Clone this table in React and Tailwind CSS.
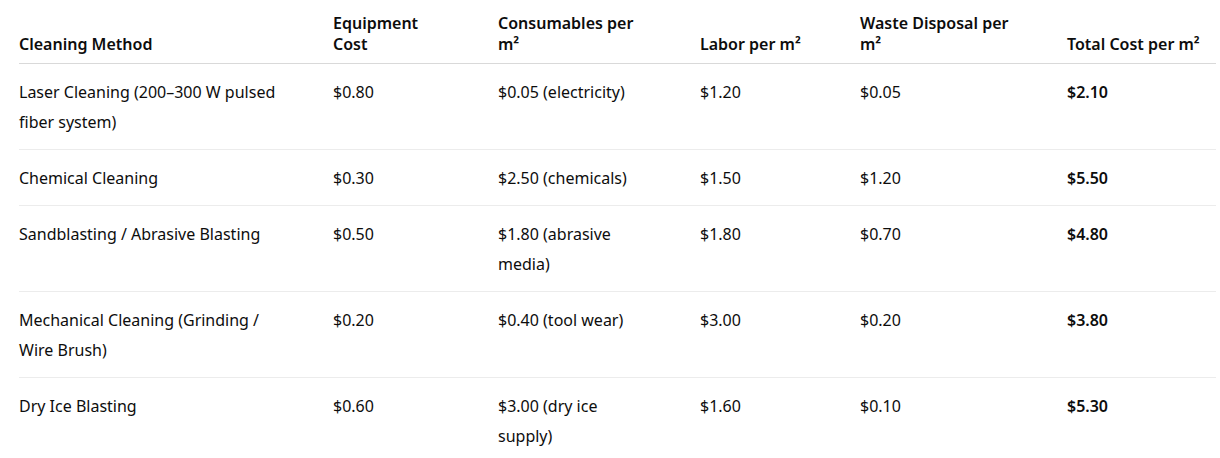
import React from "react";

const rows = [
  [["Laser Cleaning (200–300 W pulsed", "fiber system)"], ["$0.80"], ["$0.05 (electricity)"], ["$1.20"], ["$0.05"], ["$2.10"]],
  [["Chemical Cleaning"], ["$0.30"], ["$2.50 (chemicals)"], ["$1.50"], ["$1.20"], ["$5.50"]],
  [["Sandblasting / Abrasive Blasting"], ["$0.50"], ["$1.80 (abrasive", "media)"], ["$1.80"], ["$0.70"], ["$4.80"]],
  [["Mechanical Cleaning (Grinding /", "Wire Brush)"], ["$0.20"], ["$0.40 (tool wear)"], ["$3.00"], ["$0.20"], ["$3.80"]],
  [["Dry Ice Blasting"], ["$0.60"], ["$3.00 (dry ice", "supply)"], ["$1.60"], ["$0.10"], ["$5.30"]],
];

const headers = [
  ["Cleaning Method"],
  ["Equipment", "Cost"],
  ["Consumables per", "m²"],
  ["Labor per m²"],
  ["Waste Disposal per", "m²"],
  ["Total Cost per m²"],
];

function Lines({ lines }) {
  return lines.map((l, k) => (
    <React.Fragment key={k}>
      {k > 0 && <br />}
      {l}
    </React.Fragment>
  ));
}

export default function App() {
  return (
    <div
      className="w-[1220px] h-[458px] bg-white overflow-hidden text-[#0d0d0d]"
      style={{ fontFamily: "'Noto Sans', 'Open Sans', sans-serif" }}
    >
      <table className="table-fixed border-collapse ml-[19px] mt-[5px] w-[1197px] text-[16px]">
        <colgroup>
          <col className="w-[314px]" />
          <col className="w-[165px]" />
          <col className="w-[202px]" />
          <col className="w-[160px]" />
          <col className="w-[207px]" />
          <col className="w-[149px]" />
        </colgroup>
        <thead>
          <tr className="border-b border-[#d9d9d9]">
            {headers.map((h, i) => (
              <th
                key={i}
                className="text-left align-bottom font-semibold leading-[21px] pt-[8px] pb-[8px] pr-0 pl-0 whitespace-nowrap"
              >
                <Lines lines={h} />
              </th>
            ))}
          </tr>
        </thead>
        <tbody>
          {rows.map((r, i) => (
            <tr key={i} className={i < rows.length - 1 ? "border-b border-[#ececec]" : ""}>
              {r.map((c, j) => (
                <td
                  key={j}
                  className={`align-top leading-[30px] pt-[13px] pb-[12px] pr-0 pl-0 whitespace-nowrap ${j === 5 ? "font-semibold" : "font-normal"}`}
                >
                  <Lines lines={c} />
                </td>
              ))}
            </tr>
          ))}
        </tbody>
      </table>
    </div>
  );
}
